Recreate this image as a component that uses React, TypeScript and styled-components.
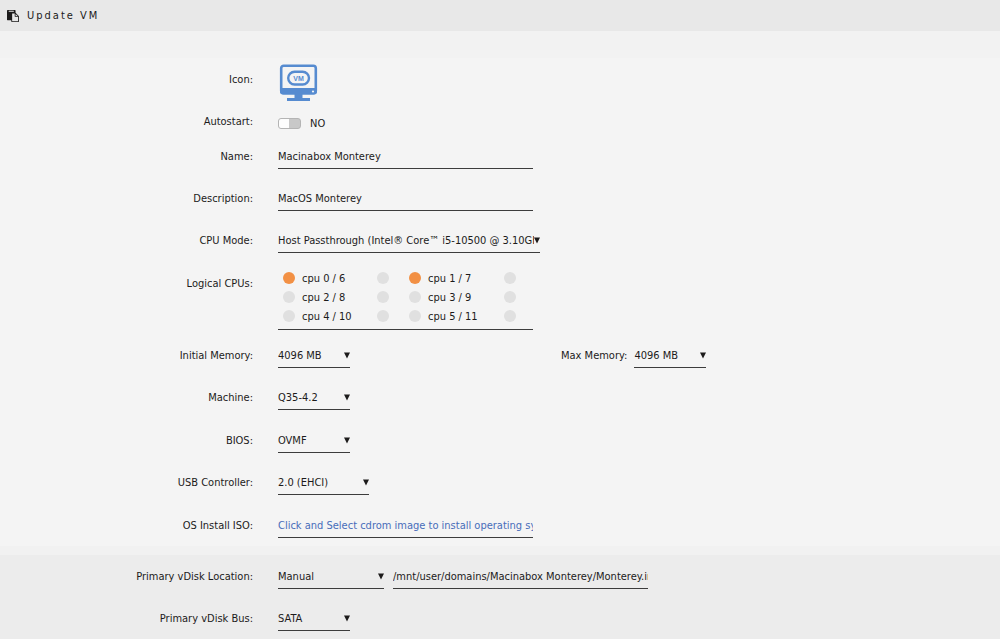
import React, { useState } from "react";
import styled, { createGlobalStyle } from "styled-components";

const GlobalStyle = createGlobalStyle`
  * { box-sizing: border-box; }
  body {
    margin: 0;
    background: #f4f4f4;
    color: #1c1b1b;
    font-family: "DejaVu Sans Condensed", "Noto Sans", sans-serif;
    font-size: 11px;
    line-height: 16px;
  }
  input, select, label { font: inherit; color: inherit; }
`;

const Header = styled.header`
  display: flex;
  align-items: center;
  gap: 8px;
  height: 31px;
  padding: 0 7px;
  background: #e8e8e8;
`;

const Title = styled.h1`
  margin: 0;
  font-size: 11px;
  font-weight: 400;
  letter-spacing: 2px;
`;

const Spacer = styled.div`
  height: 27px;
  background: #f2f2f2;
`;

const Section = styled.section<{ $shaded?: boolean }>`
  padding: ${(p) => (p.$shaded ? "9px 0 9px" : "5px 0 7px")};
  background: ${(p) => (p.$shaded ? "#ececec" : "#f4f4f4")};
  border-top: ${(p) => (p.$shaded ? "9px solid #f1f1f1" : "0")};
`;

const Row = styled.div<{ $gap?: number }>`
  display: grid;
  grid-template-columns: 253px 1fr;
  align-items: start;
  column-gap: 25px;
  margin-bottom: ${(p) => p.$gap ?? 17}px;
`;

const Label = styled.label<{ $line?: number }>`
  text-align: right;
  white-space: nowrap;
  line-height: ${(p) => p.$line ?? 26}px;
`;

const Fields = styled.div`
  display: flex;
  align-items: flex-start;
  gap: 9px;
`;

const TextInput = styled.input`
  width: 255px;
  height: 25px;
  padding: 0;
  border: 0;
  border-bottom: 1px solid #3c3c3c;
  border-radius: 0;
  background: transparent;
  outline: none;
  &::placeholder { color: #486dba; opacity: 1; }
`;

const SelectBox = styled.span<{ $width: number }>`
  display: flex;
  align-items: center;
  width: ${(p) => p.$width}px;
  height: 25px;
  border-bottom: 1px solid #3c3c3c;
`;

const Select = styled.select`
  flex: 1;
  min-width: 0;
  height: 24px;
  padding: 2px 0 0;
  border: 0;
  background: transparent;
  appearance: none;
  outline: none;
`;

const Arrow = styled.svg`
  flex: none;
  width: 6px;
  height: 7px;
  pointer-events: none;
`;

const MaxMemory = styled.div`
  display: flex;
  gap: 7px;
  margin-left: 202px;
`;

const SwitchLabel = styled.label`
  display: flex;
  align-items: center;
  gap: 9px;
  height: 24px;
`;

const Switch = styled.input`
  appearance: none;
  width: 23px;
  height: 11px;
  margin: 0;
  border: 1px solid #b4b4b4;
  border-radius: 3px;
  background: linear-gradient(to right, #fdfdfd 10px, #c8c8c8 10px);
  &:checked { background: linear-gradient(to right, #f0904a 10px, #fdfdfd 10px); }
`;

const CpuGrid = styled.div`
  display: grid;
  grid-template-columns: 126px 127px;
  grid-auto-rows: 19px;
  width: 255px;
  height: 62px;
  border-bottom: 1px solid #3c3c3c;
`;

const CpuPair = styled.div`
  display: flex;
  align-items: center;
  padding: 0 15px 0 5px;
`;

const CpuLabel = styled.label`
  display: flex;
  align-items: center;
  flex: 1;
  gap: 7px;
`;

const CpuName = styled.span`
  padding-top: 2px;
`;

const Dot = styled.input`
  appearance: none;
  flex: none;
  width: 12px;
  height: 12px;
  margin: 0;
  border-radius: 50%;
  background: #e0e0e0;
  &:checked { background: #f29044; }
`;

function PasteIcon() {
  return (
    <svg width="12" height="12" viewBox="0 0 1792 1792" fill="#1c1b1b" aria-hidden="true">
      <path d="M768 1664h896v-640h-416q-40 0-68-28t-28-68v-416h-384v1152zm256-1440v-64q0-13-9.5-22.5t-22.5-9.5h-704q-13 0-22.5 9.5t-9.5 22.5v64q0 13 9.5 22.5t22.5 9.5h704q13 0 22.5-9.5t9.5-22.5zm256 672h299l-299-299v299zm512 128v672q0 40-28 68t-68 28h-960q-40 0-68-28t-28-68v-160h-544q-40 0-68-28t-28-68v-1344q0-40 28-68t68-28h1088q40 0 68 28t28 68v328q21 13 36 28l408 408q28 28 48 76t20 88z" />
    </svg>
  );
}

function VmIcon() {
  return (
    <svg width="41" height="40" viewBox="0 0 41 40" role="img" aria-label="VM">
      <rect x="3.200" y="2.700" width="34.600" height="27.500" rx="2.500" fill="#f4f4f4" stroke="#568bd0" strokeWidth="2.600" />
      <path d="M2 25h37v3.500a3 3 0 0 1-3 3h-31a3 3 0 0 1-3-3z" fill="#568bd0" />
      <circle cx="35" cy="28.500" r="1.100" fill="#f4f4f4" />
      <rect x="10.200" y="8.700" width="20.800" height="12.800" rx="6.400" fill="none" stroke="#568bd0" strokeWidth="2.400" />
      <text x="20.600" y="17.600" fontSize="7" fontWeight="700" fontFamily="Liberation Sans, sans-serif" textAnchor="middle" fill="#568bd0">VM</text>
      <path d="M16.500 31h8v4h-8zM9 35h23v3h-23z" fill="#568bd0" />
    </svg>
  );
}

function Dropdown({ id, value, width }: { id: string; value: string; width: number }) {
  return (
    <SelectBox $width={width}>
      <Select id={id} defaultValue={value}>
        <option>{value}</option>
      </Select>
      <Arrow viewBox="0 0 6 7" aria-hidden="true">
        <path d="M0 0.500h6l-3 6z" fill="#1c1b1b" />
      </Arrow>
    </SelectBox>
  );
}

function SelectRow({ id, label, value, width, gap }: { id: string; label: string; value: string; width: number; gap?: number }) {
  return (
    <Row $gap={gap}>
      <Label htmlFor={id}>{label}</Label>
      <Fields><Dropdown id={id} value={value} width={width} /></Fields>
    </Row>
  );
}

const cpus = [[0, 6], [1, 7], [2, 8], [3, 9], [4, 10], [5, 11]];

export default function App() {
  const [autostart, setAutostart] = useState(false);
  return (
    <>
      <GlobalStyle />
      <Header>
        <PasteIcon />
        <Title>Update VM</Title>
      </Header>
      <Spacer />
      <main>
        <Section>
          <Row $gap={8}>
            <Label as="span" $line={34}>Icon:</Label>
            <Fields><VmIcon /></Fields>
          </Row>
          <Row $gap={9}>
            <Label htmlFor="autostart" $line={22}>Autostart:</Label>
            <Fields>
              <SwitchLabel>
                <Switch id="autostart" type="checkbox" checked={autostart} onChange={(e) => setAutostart(e.target.checked)} />
                <CpuName>{autostart ? "YES" : "NO"}</CpuName>
              </SwitchLabel>
            </Fields>
          </Row>
          <Row $gap={16}>
            <Label htmlFor="name">Name:</Label>
            <Fields><TextInput id="name" defaultValue="Macinabox Monterey" /></Fields>
          </Row>
          <Row $gap={16}>
            <Label htmlFor="description">Description:</Label>
            <Fields><TextInput id="description" defaultValue="MacOS Monterey" /></Fields>
          </Row>
          <SelectRow id="cpumode" label="CPU Mode:" value="Host Passthrough (Intel® Core™ i5-10500 @ 3.10GHz)" width={262} gap={14} />
          <Row $gap={13}>
            <Label as="span" $line={32}>Logical CPUs:</Label>
            <CpuGrid>
              {cpus.map(([a, b]) => (
                <CpuPair key={a}>
                  <CpuLabel>
                    <Dot type="checkbox" defaultChecked={a < 2} />
                    <CpuName>cpu {a} / {b}</CpuName>
                  </CpuLabel>
                  <Dot type="checkbox" aria-label={`cpu ${b}`} />
                </CpuPair>
              ))}
            </CpuGrid>
          </Row>
          <Row $gap={16}>
            <Label htmlFor="memory">Initial Memory:</Label>
            <Fields>
              <Dropdown id="memory" value="4096 MB" width={72} />
              <MaxMemory>
                <Label htmlFor="maxmemory">Max Memory:</Label>
                <Dropdown id="maxmemory" value="4096 MB" width={72} />
              </MaxMemory>
            </Fields>
          </Row>
          <SelectRow id="machine" label="Machine:" value="Q35-4.2" width={72} />
          <SelectRow id="bios" label="BIOS:" value="OVMF" width={72} gap={16} />
          <SelectRow id="usb" label="USB Controller:" value="2.0 (EHCI)" width={91} />
          <Row $gap={0}>
            <Label htmlFor="iso">OS Install ISO:</Label>
            <Fields><TextInput id="iso" placeholder="Click and Select cdrom image to install operating system" /></Fields>
          </Row>
        </Section>
        <Section $shaded>
          <Row $gap={16}>
            <Label htmlFor="location">Primary vDisk Location:</Label>
            <Fields>
              <Dropdown id="location" value="Manual" width={106} />
              <TextInput aria-label="Primary vDisk path" defaultValue="/mnt/user/domains/Macinabox Monterey/Monterey.img" />
            </Fields>
          </Row>
          <SelectRow id="bus" label="Primary vDisk Bus:" value="SATA" width={72} gap={0} />
        </Section>
      </main>
    </>
  );
}
